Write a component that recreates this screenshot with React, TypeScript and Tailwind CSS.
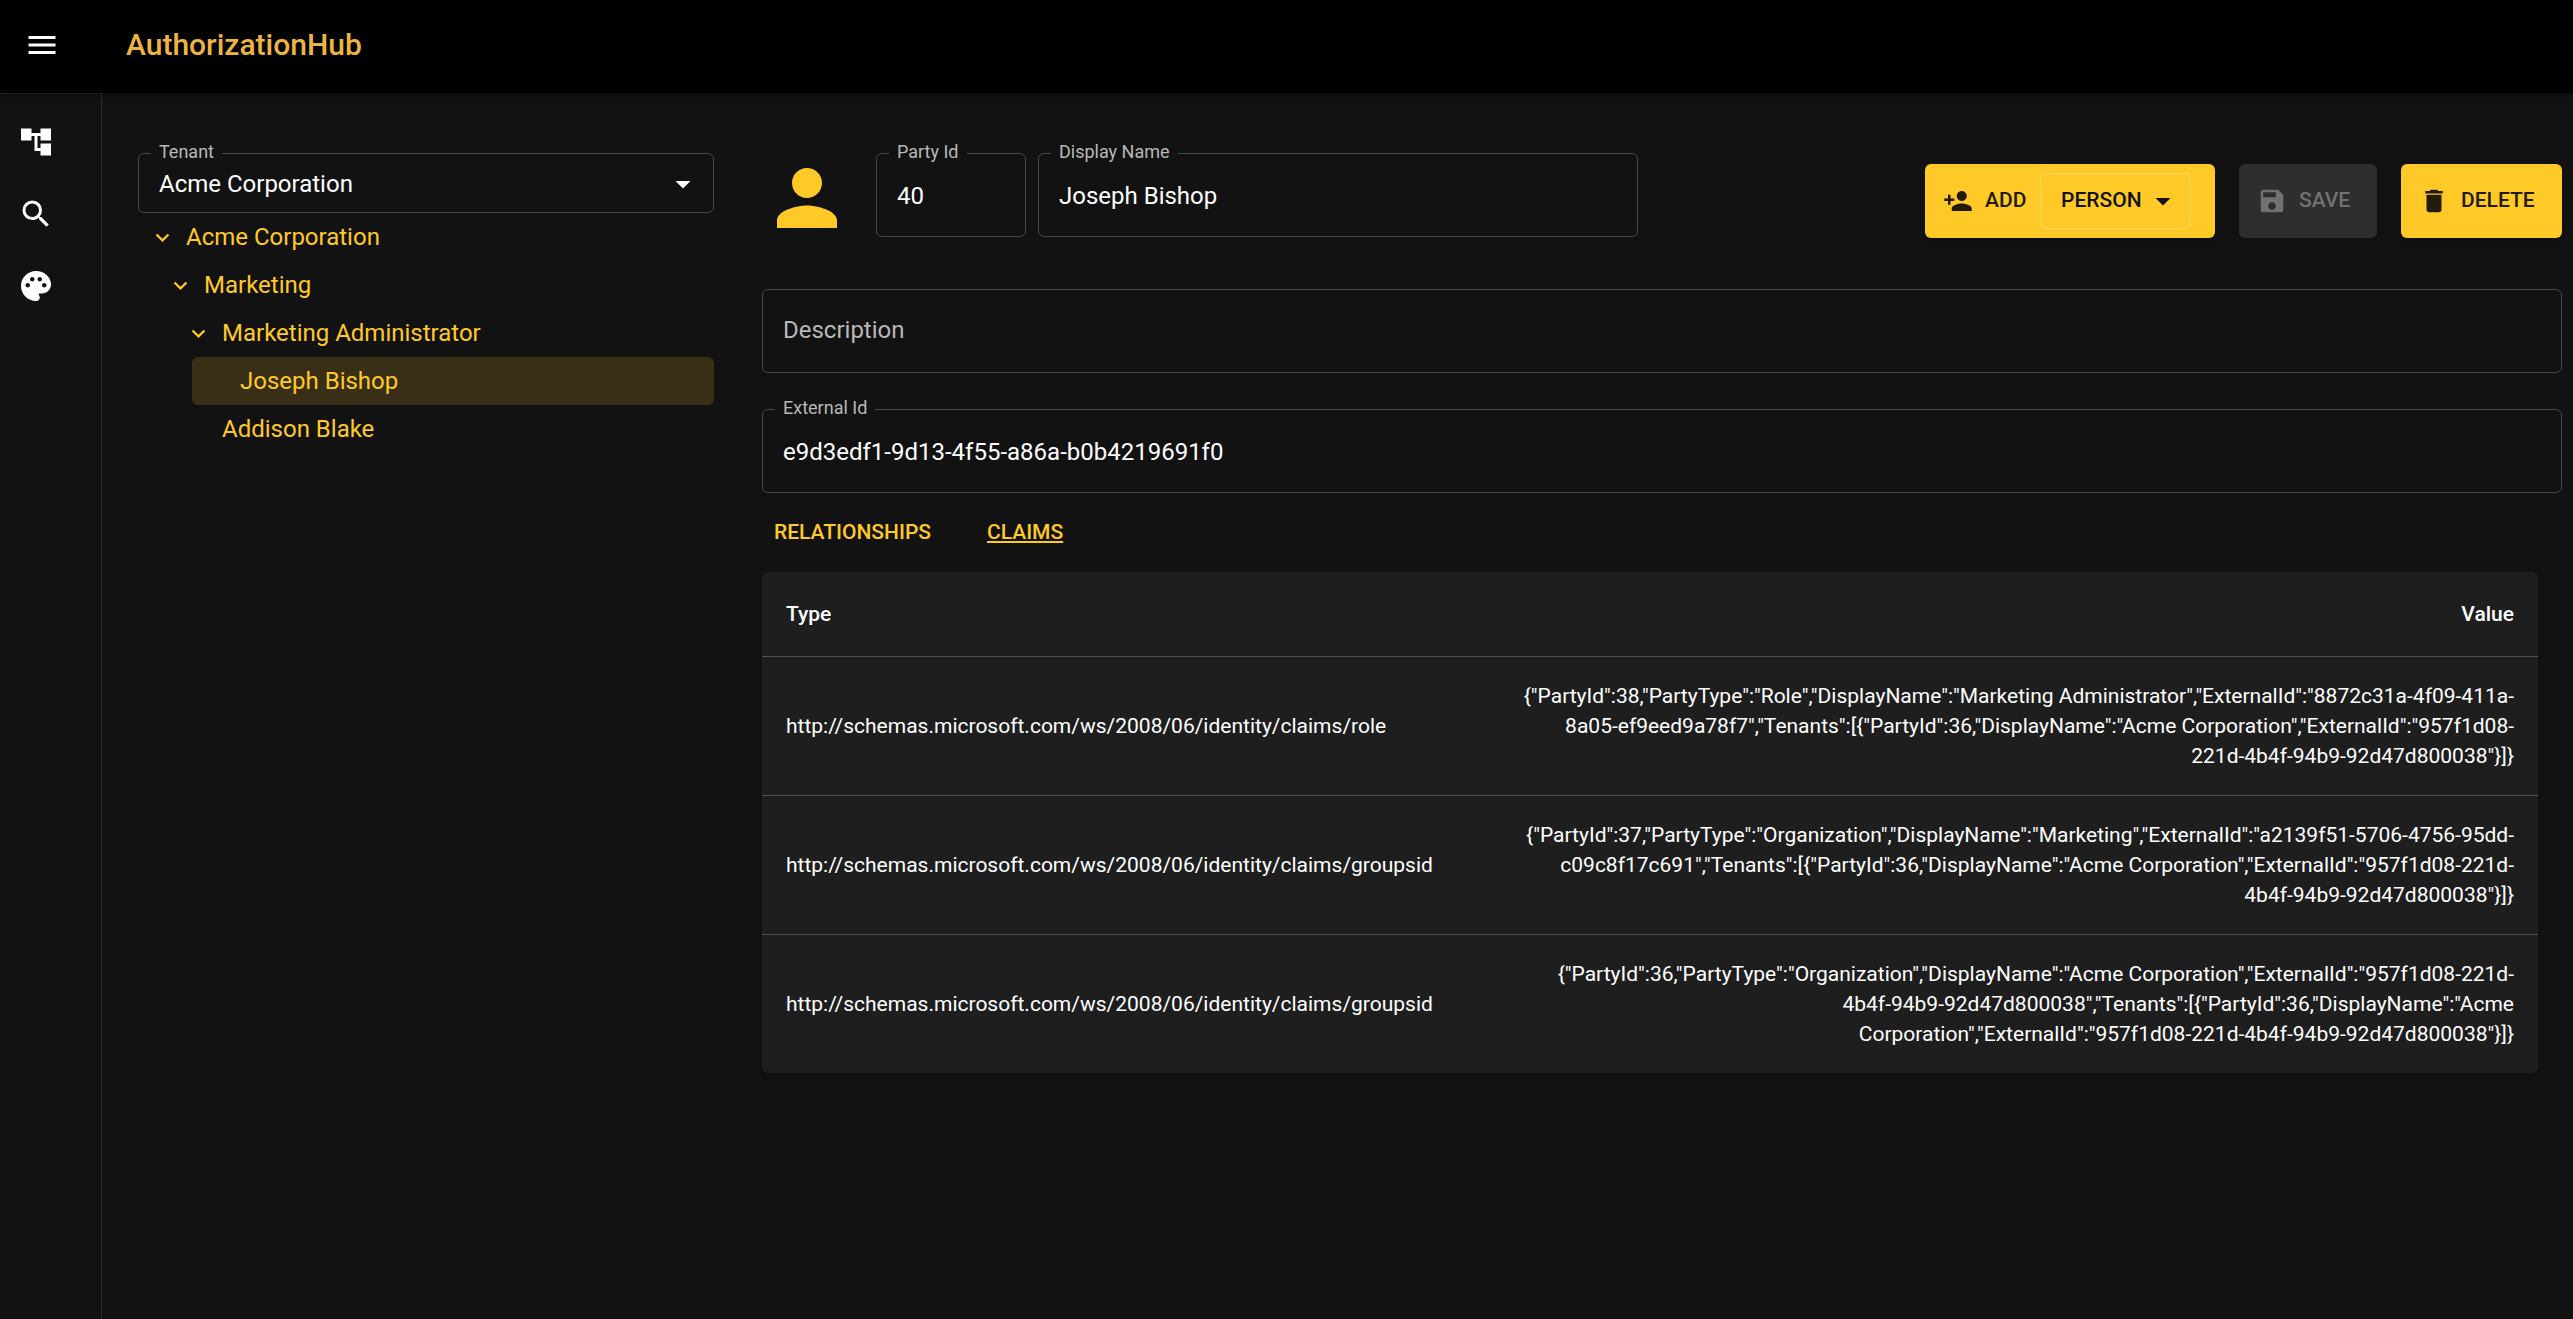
import type { ReactNode } from "react";
import {
  MdAccountTree,
  MdArrowDropDown,
  MdDelete,
  MdExpandMore,
  MdMenu,
  MdPalette,
  MdPerson,
  MdPersonAdd,
  MdSave,
  MdSearch,
} from "react-icons/md";

const navItems = [
  { label: "Hierarchy", icon: <MdAccountTree size={36} /> },
  { label: "Search", icon: <MdSearch size={36} /> },
  { label: "Theme", icon: <MdPalette size={36} /> },
];

const treeItems = [
  { name: "Acme Corporation", indent: "ml-0", open: true },
  { name: "Marketing", indent: "ml-[18px]", open: true },
  { name: "Marketing Administrator", indent: "ml-9", open: true },
  { name: "Joseph Bishop", indent: "ml-[54px]", open: false, selected: true },
  { name: "Addison Blake", indent: "ml-9", open: false },
];

const claims = [
  {
    type: "http://schemas.microsoft.com/ws/2008/06/identity/claims/role",
    value:
      '{"PartyId":38,"PartyType":"Role","DisplayName":"Marketing Administrator","ExternalId":"8872c31a-4f09-411a-8a05-ef9eed9a78f7","Tenants":[{"PartyId":36,"DisplayName":"Acme Corporation","ExternalId":"957f1d08-221d-4b4f-94b9-92d47d800038"}]}',
  },
  {
    type: "http://schemas.microsoft.com/ws/2008/06/identity/claims/groupsid",
    value:
      '{"PartyId":37,"PartyType":"Organization","DisplayName":"Marketing","ExternalId":"a2139f51-5706-4756-95dd-c09c8f17c691","Tenants":[{"PartyId":36,"DisplayName":"Acme Corporation","ExternalId":"957f1d08-221d-4b4f-94b9-92d47d800038"}]}',
  },
  {
    type: "http://schemas.microsoft.com/ws/2008/06/identity/claims/groupsid",
    value:
      '{"PartyId":36,"PartyType":"Organization","DisplayName":"Acme Corporation","ExternalId":"957f1d08-221d-4b4f-94b9-92d47d800038","Tenants":[{"PartyId":36,"DisplayName":"Acme Corporation","ExternalId":"957f1d08-221d-4b4f-94b9-92d47d800038"}]}',
  },
];

function Outlined({ id, label, className, children }: { id: string; label: string; className: string; children: ReactNode }) {
  return (
    <div className={`relative rounded-md border border-[#484848] ${className}`}>
      <label htmlFor={id} className="absolute -top-3.5 left-3 bg-[#121212] px-2 text-lg leading-6 whitespace-nowrap text-[#b8b8b8]">
        {label}
      </label>
      {children}
    </div>
  );
}

function TextField({ id, label, value, className }: { id: string; label: string; value: string; className: string }) {
  return (
    <Outlined id={id} label={label} className={className}>
      <input id={id} defaultValue={value} className="h-[82px] w-full bg-transparent px-5 pt-0.5 text-2xl text-white outline-none" />
    </Outlined>
  );
}

export default function App() {
  return (
    <div className="flex min-h-screen flex-col bg-[#121212] font-['Roboto',sans-serif] text-white">
      <header className="relative z-10 flex h-[93px] items-center bg-black pb-[3px] pl-6 shadow-[0_3px_6px_rgba(0,0,0,0.35)]">
        <button aria-label="Open menu" className="mr-[66px]">
          <MdMenu size={36} />
        </button>
        <h1 className="text-3xl font-medium text-[#edb441]">AuthorizationHub</h1>
      </header>

      <div className="flex grow">
        <nav className="flex w-[102px] shrink-0 flex-col border-t border-r border-[#2e2e2e] pt-3">
          {navItems.map((item) => (
            <button key={item.label} aria-label={item.label} className="flex h-[72px] items-center pl-[18px]">
              {item.icon}
            </button>
          ))}
        </nav>

        <main className="flex min-w-0 grow gap-12 pt-[60px] pr-[11px] pl-9">
          <aside className="w-[576px] shrink-0">
            <Outlined id="tenant" label="Tenant" className="h-[60px]">
              <select id="tenant" className="h-full w-full appearance-none bg-transparent pt-0.5 pl-5 text-2xl text-white outline-none">
                <option>Acme Corporation</option>
              </select>
              <MdArrowDropDown size={36} className="pointer-events-none absolute top-3 right-3" />
            </Outlined>

            <ul role="tree" className="text-2xl text-[#ffca28]">
              {treeItems.map((item) => (
                <li
                  key={item.name}
                  role="treeitem"
                  aria-selected={Boolean(item.selected)}
                  className={`flex h-12 items-center gap-3 rounded-md px-3 ${item.indent} ${item.selected ? "bg-[#382f16]" : ""}`}
                >
                  <span className="flex w-6 shrink-0 justify-center">
                    {item.open && <MdExpandMore size={27} className="shrink-0" />}
                  </span>
                  {item.name}
                </li>
              ))}
            </ul>
          </aside>

          <section className="min-w-0 grow">
            <div className="flex h-24 items-start">
              <MdPerson size={90} className="mr-6 shrink-0 text-[#ffca28]" />
              <TextField id="party-id" label="Party Id" value="40" className="mr-3 w-[150px] shrink-0" />
              <TextField id="display-name" label="Display Name" value="Joseph Bishop" className="w-1/3" />

              <div className="ml-auto flex shrink-0 gap-6 self-center text-[21px] font-medium text-[#211b08]">
                <div className="flex h-[74px] items-center rounded-md bg-[#ffca28] pr-6 pl-[18px] shadow-md">
                  <button className="mr-3 flex min-w-[85px] items-center gap-3">
                    <MdPersonAdd size={30} />
                    ADD
                  </button>
                  <div className="relative text-[#121212]">
                    <select aria-label="Party type" className="h-14 w-[151px] appearance-none rounded-md border border-white/25 pl-5 font-medium outline-none">
                      <option>PERSON</option>
                    </select>
                    <MdArrowDropDown size={36} className="pointer-events-none absolute top-[10px] right-[10px]" />
                  </div>
                </div>
                <button disabled className="flex h-[74px] min-w-[138px] items-center gap-3 rounded-md bg-[#2e2e2e] pr-6 pl-[18px] text-[#717171]">
                  <MdSave size={30} />
                  SAVE
                </button>
                <button className="flex h-[74px] min-w-[161px] items-center gap-3 rounded-md bg-[#ffca28] pr-6 pl-[18px] shadow-md">
                  <MdDelete size={30} />
                  DELETE
                </button>
              </div>
            </div>

            <input
              aria-label="Description"
              placeholder="Description"
              className="mt-10 block h-[84px] w-full rounded-md border border-[#484848] bg-transparent px-5 pb-0.5 text-2xl outline-none placeholder:text-[#b8b8b8]"
            />
            <TextField id="external-id" label="External Id" value="e9d3edf1-9d13-4f55-a86a-b0b4219691f0" className="mt-9" />

            <div role="tablist" className="mt-3 flex h-[55px] gap-6 text-[21px] font-medium text-[#ffca28]">
              <button role="tab" aria-selected={false} className="min-w-[189px] px-3 text-left">
                RELATIONSHIPS
              </button>
              <button role="tab" aria-selected={true} className="px-3 underline decoration-2 underline-offset-2">
                CLAIMS
              </button>
            </div>

            <div className="mt-3 mr-6 overflow-hidden rounded-md bg-[#1e1e1e] shadow-md">
              <table className="w-full border-collapse text-[21px] leading-[30px]">
                <thead>
                  <tr className="h-[84px] border-b border-[#515151]">
                    <th className="w-[41%] px-6 text-left font-medium">Type</th>
                    <th className="px-6 text-right font-medium">Value</th>
                  </tr>
                </thead>
                <tbody>
                  {claims.map((claim, i) => (
                    <tr key={i} className="border-b border-[#515151] last:border-b-0">
                      <td className="px-6 py-6">{claim.type}</td>
                      <td className="px-6 py-6 text-right">{claim.value}</td>
                    </tr>
                  ))}
                </tbody>
              </table>
            </div>
          </section>
        </main>
      </div>
    </div>
  );
}
